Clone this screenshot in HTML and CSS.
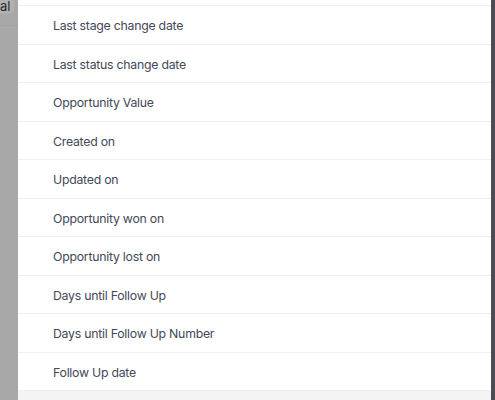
FILE: index.html
```html
<!DOCTYPE html>
<html>
<head>
<meta charset="utf-8">
<link rel="stylesheet" href="styles.css">
</head>
<body>
<div class="screen">
  <div class="backdrop">
    <div class="chip">al</div>
    <div class="rule"></div>
  </div>
  <div class="panel">
    <ul class="list">
      <li class="row">Last stage change date</li>
      <li class="row">Last status change date</li>
      <li class="row">Opportunity Value</li>
      <li class="row">Created on</li>
      <li class="row">Updated on</li>
      <li class="row">Opportunity won on</li>
      <li class="row">Opportunity lost on</li>
      <li class="row">Days until Follow Up</li>
      <li class="row">Days until Follow Up Number</li>
      <li class="row">Follow Up date</li>
      <li class="row row-hover"></li>
    </ul>
  </div>
  <div class="edge"></div>
</div>
</body>
</html>
```

FILE: styles.css
```css
html, body {
  margin: 0;
  padding: 0;
  width: 495px;
  height: 400px;
  overflow: hidden;
  font-family: Inter, "Noto Sans", sans-serif;
}
.screen {
  display: flex;
  width: 495px;
  height: 400px;
  background: #a9a9a9;
}
.backdrop {
  width: 18px;
  flex: none;
  background: #a8a8a8;
  display: flex;
  flex-direction: column;
}
.chip {
  width: 14px;
  height: 14px;
  background: #b1b1b1;
  border-bottom-right-radius: 5px;
  font-size: 13px;
  line-height: 12px;
  color: #2a2a2a;
  overflow: hidden;
  white-space: nowrap;
}
.rule {
  margin-top: 11px;
  height: 1px;
  background: #a0a0a0;
}
.panel {
  flex: 1;
  background: #ffffff;
  overflow: hidden;
  padding-top: 5px;
}
.list {
  list-style: none;
  margin: 0;
  padding: 0;
}
.row {
  box-sizing: border-box;
  height: 38.5px;
  border-top: 1px solid #efeff1;
  padding-left: 35px;
  padding-top: 2px;
  display: flex;
  align-items: center;
  font-size: 12.3px;
  color: #444857;
  letter-spacing: -0.25px;
}
.row-hover {
  background: #f4f4f7;
  border-top-color: #f0f0f3;
}
.edge {
  width: 4px;
  flex: none;
  background: #4c4c54;
}
```
